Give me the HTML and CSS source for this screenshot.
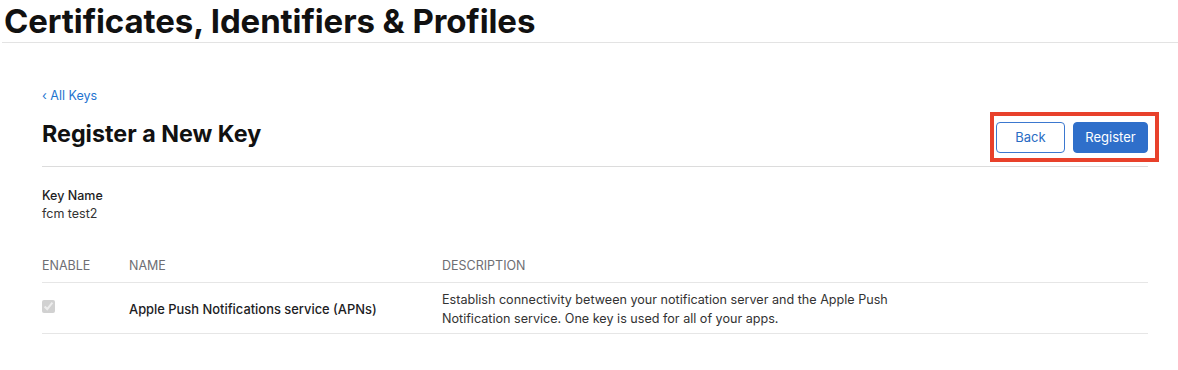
FILE: index.html
```html
<!DOCTYPE html>
<html lang="en">
<head>
    <meta charset="UTF-8">
    <meta name="viewport" content="width=device-width, initial-scale=1.0">
    <title>Certificates, Identifiers &amp; Profiles</title>
    <link rel="stylesheet" href="styles.css">
</head>
<body>
    <header class="page-header">
        <h1>Certificates, Identifiers &amp; Profiles</h1>
    </header>

    <main class="content">
        <a class="back-link" href="#">&lsaquo; All Keys</a>

        <div class="title-bar">
            <h2>Register a New Key</h2>
            <div class="actions">
                <button class="btn btn-secondary">Back</button>
                <button class="btn btn-primary">Register</button>
            </div>
        </div>

        <div class="field">
            <div class="field-label">Key Name</div>
            <div class="field-value">fcm test2</div>
        </div>

        <table class="services">
            <thead>
                <tr>
                    <th class="col-enable">Enable</th>
                    <th class="col-name">Name</th>
                    <th>Description</th>
                </tr>
            </thead>
            <tbody>
                <tr>
                    <td class="col-enable"><input type="checkbox" checked disabled></td>
                    <td class="col-name service-name">Apple Push Notifications service (APNs)</td>
                    <td class="service-desc">Establish connectivity between your notification server and the Apple Push Notification service. One key is used for all of your apps.</td>
                </tr>
            </tbody>
        </table>
    </main>
</body>
</html>
```

FILE: styles.css
```css
body {
    margin: 0;
    font-family: Inter, "Noto Sans", Arial, sans-serif;
    color: #1d1d1f;
    background: #fff;
}

.page-header {
    margin-left: 2px;
    border-bottom: 1px solid #e3e3e3;
    height: 42px;
}

.page-header h1 {
    margin: 0;
    padding-left: 2px;
    font-size: 33px;
    font-weight: 700;
    line-height: 44px;
    letter-spacing: -0.1px;
    color: #111;
    position: relative;
    top: -1px;
}

.content {
    padding: 46px 30px 0 42px;
}

.back-link {
    display: block;
    font-size: 12.5px;
    line-height: 16px;
    color: #1f74d0;
    text-decoration: none;
    position: relative;
    top: -1px;
}

.title-bar {
    display: flex;
    justify-content: space-between;
    align-items: center;
    border-bottom: 1px solid #dcdcdc;
    height: 60px;
    margin-top: 1px;
}

.title-bar h2 {
    margin: 0;
    font-size: 23.3px;
    font-weight: 700;
    color: #111;
    position: relative;
    top: -3px;
}

.actions {
    display: flex;
    gap: 8px;
    position: relative;
    top: 1px;
}

/* annotation box drawn round the buttons */
.actions::after {
    content: "";
    position: absolute;
    left: -6px;
    right: -11px;
    top: -10px;
    bottom: -9px;
    border: 4px solid #e8412b;
    pointer-events: none;
}

.btn {
    font-family: inherit;
    font-size: 13px;
    height: 31px;
    border-radius: 4px;
    cursor: pointer;
}

.btn-secondary {
    width: 69px;
    background: #fff;
    color: #2a6cc4;
    border: 1px solid #3b78cf;
}

.btn-primary {
    width: 75px;
    background: #2f6fca;
    color: #fff;
    border: 1px solid #2f6fca;
}

.field {
    margin-top: 20px;
    font-size: 12.5px;
    line-height: 18px;
}

.field-label {
    font-weight: 500;
    color: #1d1d1f;
}

.field-value {
    color: #333;
}

.services {
    width: 1106px;
    margin-top: 35px;
    border-collapse: collapse;
    font-size: 12.6px;
}

.services th {
    text-align: left;
    font-weight: 400;
    text-transform: uppercase;
    color: #6e6e73;
    font-size: 12.5px;
    padding: 0 0 9px;
    border-bottom: 1px solid #e6e6e6;
}

.services td {
    padding: 7px 0 5px;
    border-bottom: 1px solid #e6e6e6;
    vertical-align: middle;
    line-height: 19px;
}

.col-enable {
    width: 87px;
}

.col-name {
    width: 313px;
}

.services td.col-enable {
    vertical-align: top;
    padding-top: 17px;
}

.services input[type="checkbox"] {
    margin: 0;
    width: 13px;
    height: 13px;
    display: block;
}

.service-name {
    font-weight: 500;
    font-size: 12.9px;
    color: #1d1d1f;
}

.service-desc {
    color: #333;
    padding-right: 220px !important;
}
```
